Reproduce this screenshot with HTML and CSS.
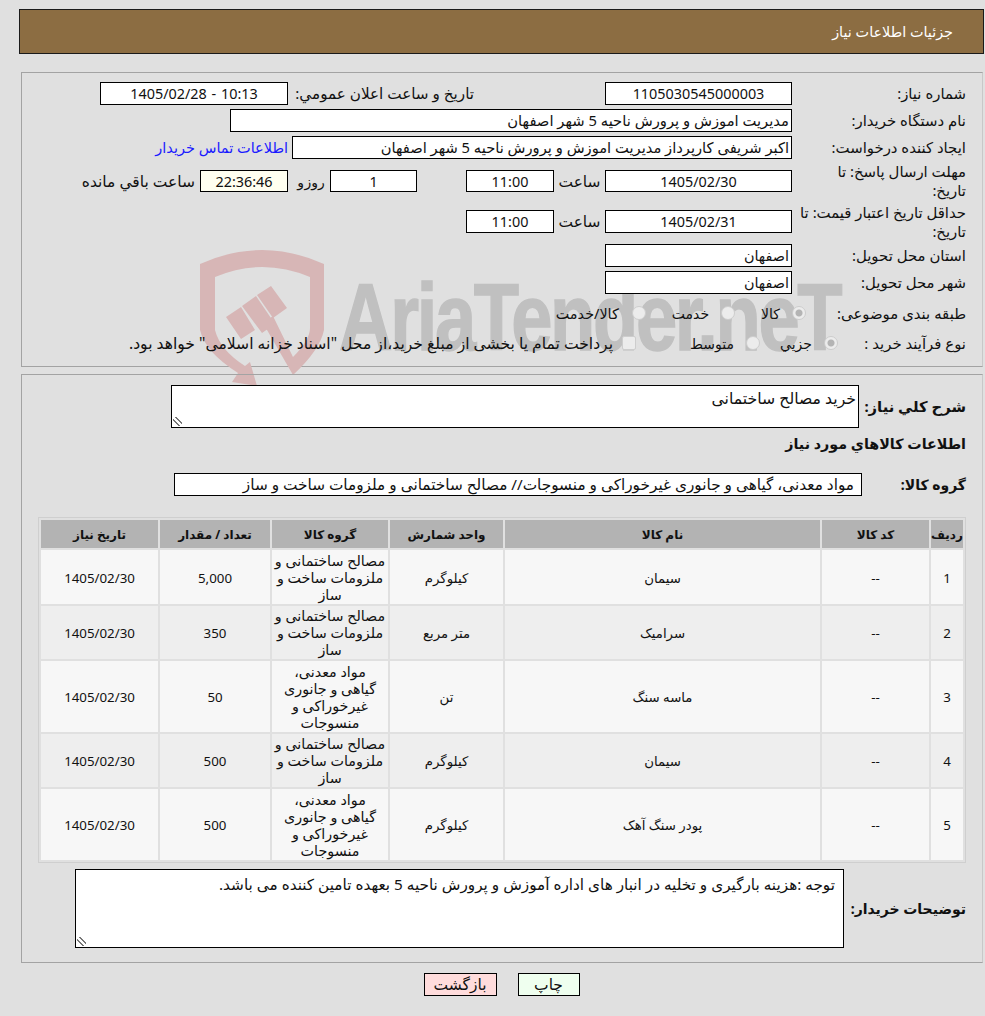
FILE: index.html
```html
<!DOCTYPE html>
<html lang="fa" dir="rtl">
<head>
<meta charset="utf-8">
<title>جزئیات اطلاعات نیاز</title>
<link rel="stylesheet" href="styles.css">
</head>
<body>
<header class="title-bar">جزئیات اطلاعات نیاز</header>

<section class="panel panel-top">
  <div class="watermark" aria-hidden="true">
    <svg class="wm-shield" viewBox="195 245 135 145" width="135" height="145">
      <path d="M200 264 Q262 236 324 264 L324 330 Q320 350 293 375 L263 323 L273 316 L293 357 Q310 340 310 328 L310 277 Q262 257 215 277 L215 330 Q220 350 245 366 L250 362 L257 386 L232 382 L238 373 Q205 352 200 330 Z" fill="#d7b6b6"/>
      <path d="M226 317 L241 307 L255 330 L241 339 Z M242 306 L256 296 L275 324 L262 333 Z M257 295 L271 286 L287 308 L273 318 Z" fill="#d7b6b6"/>
    </svg>
    <span class="wm-text" dir="ltr">AriaTender.neT</span>
  </div>

  <div class="row r1">
    <span class="label">شماره نیاز:</span>
    <span class="box w-date">1105030545000003</span>
    <span class="label-public">تاریخ و ساعت اعلان عمومي:</span>
    <span class="box w-date2">10:13 - 1405/02/28</span>
  </div>
  <div class="row r2">
    <span class="label">نام دستگاه خریدار:</span>
    <span class="box start w-buyer">مدیریت اموزش و پرورش ناحیه 5 شهر اصفهان</span>
  </div>
  <div class="row r3">
    <span class="label">ایجاد کننده درخواست:</span>
    <span class="box start w-creator">اکبر شریفی کارپرداز مدیریت اموزش و پرورش ناحیه 5 شهر اصفهان</span>
    <a class="contact" href="#">اطلاعات تماس خریدار</a>
  </div>
  <div class="row r4">
    <span class="label two-line">مهلت ارسال پاسخ: تا<br>تاریخ:</span>
    <span class="box w-date">1405/02/30</span>
    <span class="time-label">ساعت</span>
    <span class="box w-time">11:00</span>
    <span class="box w-days">1</span>
    <span class="days-label">روز و</span>
    <span class="box w-clock">22:36:46</span>
    <span class="clock-label">ساعت باقي مانده</span>
  </div>
  <div class="row r5">
    <span class="label two-line">حداقل تاریخ اعتبار قیمت: تا<br>تاریخ:</span>
    <span class="box w-date">1405/02/31</span>
    <span class="time-label">ساعت</span>
    <span class="box w-time">11:00</span>
  </div>
  <div class="row r6">
    <span class="label">استان محل تحویل:</span>
    <span class="box start w-date">اصفهان</span>
  </div>
  <div class="row r7">
    <span class="label">شهر محل تحویل:</span>
    <span class="box start w-date">اصفهان</span>
  </div>
  <div class="row r8">
    <span class="label">طبقه بندی موضوعی:</span>
    <span class="opt o1"><i class="radio on"></i>کالا</span>
    <span class="opt o2"><i class="radio"></i>خدمت</span>
    <span class="opt o3"><i class="radio"></i>کالا/خدمت</span>
  </div>
  <div class="row r9">
    <span class="label">نوع فرآیند خرید :</span>
    <span class="opt p1"><i class="radio on"></i>جزیي</span>
    <span class="opt p2"><i class="radio"></i>متوسط</span>
    <span class="opt p3"><i class="check"></i>پرداخت تمام یا بخشی از مبلغ خرید،از محل "اسناد خزانه اسلامی" خواهد بود.</span>
  </div>
</section>

<section class="panel panel-bottom">
  <div class="row need">
    <span class="label strong">شرح کلي نیاز:</span>
    <div class="area area-need">خرید مصالح ساختمانی<i class="grip"></i></div>
  </div>
  <h2 class="section-title">اطلاعات کالاهاي مورد نیاز</h2>
  <div class="row group">
    <span class="label strong">گروه کالا:</span>
    <span class="box start w-group">مواد معدنی، گیاهی و جانوری غیرخوراکی و منسوجات// مصالح ساختمانی و ملزومات ساخت و ساز</span>
  </div>

  <table class="items">
    <colgroup>
      <col class="c1"><col class="c2"><col class="c3"><col class="c4"><col class="c5"><col class="c6"><col class="c7">
    </colgroup>
    <thead>
      <tr><th>ردیف</th><th>کد کالا</th><th>نام کالا</th><th>واحد شمارش</th><th>گروه کالا</th><th>تعداد / مقدار</th><th>تاریخ نیاز</th></tr>
    </thead>
    <tbody>
      <tr class="h54"><td>1</td><td>--</td><td>سیمان</td><td>کیلوگرم</td><td class="cat">مصالح ساختمانی و ملزومات ساخت و ساز</td><td>5,000</td><td>1405/02/30</td></tr>
      <tr class="h53"><td>2</td><td>--</td><td>سرامیک</td><td>متر مربع</td><td class="cat">مصالح ساختمانی و ملزومات ساخت و ساز</td><td>350</td><td>1405/02/30</td></tr>
      <tr class="h71"><td>3</td><td>--</td><td>ماسه سنگ</td><td>تن</td><td class="cat">مواد معدنی،<br>گیاهی و جانوری غیرخوراکی و منسوجات</td><td>50</td><td>1405/02/30</td></tr>
      <tr class="h53"><td>4</td><td>--</td><td>سیمان</td><td>کیلوگرم</td><td class="cat">مصالح ساختمانی و ملزومات ساخت و ساز</td><td>500</td><td>1405/02/30</td></tr>
      <tr class="h71"><td>5</td><td>--</td><td>پودر سنگ آهک</td><td>کیلوگرم</td><td class="cat">مواد معدنی،<br>گیاهی و جانوری غیرخوراکی و منسوجات</td><td>500</td><td>1405/02/30</td></tr>
    </tbody>
  </table>

  <div class="row notes">
    <span class="label strong">توضیحات خریدار:</span>
    <div class="area area-notes">توجه :هزینه بارگیری و تخلیه در انبار های اداره آموزش و پرورش ناحیه 5 بعهده تامین کننده می باشد.<i class="grip"></i></div>
  </div>
</section>

<div class="actions">
  <button class="btn print" type="button">چاپ</button>
  <button class="btn back" type="button">بازگشت</button>
</div>
</body>
</html>
```

FILE: styles.css
```css
* { box-sizing: border-box; }
html, body { margin: 0; height: 1016px; overflow: hidden; }
body {
  background: #e0e0e0;
  color: #111;
  font: 14.4px/17px "Noto Sans", "DejaVu Sans", sans-serif;
  padding: 9px 1px 0 0;
  direction: rtl;
}
.title-bar {
  margin: 0 0 18px 19px;
  height: 45px;
  background: #8c6d42;
  border: 1px solid #1a1a1a;
  color: #fff;
  font-size: 14.4px;
  padding: 13px 30px 0 0;
}
.panel {
  position: relative;
  margin: 0 1px 0 21px;
  border: 1px solid #a3a3a3;
  border-right-color: #c8c8c8;
  padding-right: 16px;
}
.panel-top { height: 295px; padding-top: 9px; margin-bottom: 7px; }
.panel-bottom { height: 589px; padding-top: 10px; }

.watermark { position: absolute; z-index: 0; left: 173px; top: 172px; width: 630px; height: 145px; pointer-events: none; }
.wm-shield { position: absolute; left: 0; top: 0; display: block; }
.wm-text {
  position: absolute; left: 144px; top: 25px;
  font: bold 95px/95px "Liberation Sans", sans-serif;
  letter-spacing: -3px;
  color: #c0c0c0;
  -webkit-text-stroke: 1.5px #c0c0c0;
  transform: scaleX(.78);
  transform-origin: left top;
  white-space: nowrap;
}

.row { position: relative; display: flex; align-items: center; }
.r1, .r2, .r3 { height: 23px; margin-bottom: 4px; }
.r3 { margin-bottom: 6px; }
.r4 { height: 22px; margin: 11px 0 18px; }
.r5 { height: 23px; margin-bottom: 11px; }
.r6 { height: 23px; margin-bottom: 4px; }
.r7 { height: 23px; margin-bottom: 8px; }
.r8 { height: 22px; margin-bottom: 8px; }
.r9 { height: 22px; }

.label { width: 174px; flex: none; font-size: 14.9px; }
.two-line { line-height: 19px; }
.strong { font-size: 14px; font-weight: 700; }
.r8 .label { width: 160px; }
.r9 .label { width: 128px; }

.box {
  flex: none;
  height: 100%;
  background: #fff;
  border: 1px solid #000;
  display: flex;
  align-items: center;
  justify-content: center;
  white-space: nowrap;
  position: relative;
  overflow: hidden;
}
.box.start { justify-content: flex-start; padding-right: 2px; }
.w-date { width: 187px; }
.w-date2 { width: 188px; margin-right: 5px; word-spacing: 1px; }
.w-buyer { width: 562px; font-size: 14.75px; }
.w-creator { width: 500px; font-size: 14.7px; }
.w-time { width: 88px; }
.w-days { width: 87px; margin-right: 49px; }
.w-clock { width: 88px; background: #fffff0; }
.box.w-group { width: 688px; padding-right: 7px; font-size: 15.3px; }

.label-public { width: 181px; margin-right: 131px; flex: none; white-space: nowrap; font-size: 15.2px; }
.contact { margin-right: 4px; color: #1a1aff; text-decoration: none; white-space: nowrap; font-size: 14.5px; }
.time-label { width: 51px; flex: none; text-align: center; font-size: 15.4px; }
.days-label { width: 42px; flex: none; padding-left: 4px; text-align: center; white-space: nowrap; font-size: 14px; word-spacing: -3px; }
.clock-label { margin-right: 5px; white-space: nowrap; font-size: 15.5px; }

.opt { position: relative; display: inline-flex; align-items: center; white-space: nowrap; font-size: 14px; gap: 12px; }
.radio, .check { flex: none; display: block; width: 14px; height: 14px; background: #ececec; border: 1px solid #cdcdcd; }
.radio { border-radius: 50%; }
.radio.on { background: radial-gradient(circle, #b4b4b4 0 3px, #ececec 4px); }
.check { border-radius: 2px; }
.o2 { margin-right: 26px; }
.o3 { gap: 13px; margin-right: 26px; font-size: 14.4px; }
.p2 { margin-right: 20px; }
.p3 { margin-right: 54px; gap: 9px; font-size: 15.6px; }

.need { height: 43px; }
.need .label { width: 107px; font-size: 14.8px; }
.area {
  position: relative;
  flex: none;
  background: #fff;
  border: 1px solid #000;
  height: 100%;
}
.area-need { width: 688px; padding: 4px 2px; font-size: 15.7px; }
.area-notes { width: 769px; padding: 6px 8px; font-size: 15.27px; }
.grip {
  position: absolute; left: 1px; bottom: 1px; width: 9px; height: 9px;
  background: linear-gradient(45deg, transparent 0 30%, #777 30% 40%, transparent 40% 60%, #777 60% 70%, transparent 70%);
}
.section-title { margin: 7px 0 21px; font-size: 14.3px; line-height: 17px; font-weight: 700; }
.group { height: 23px; }
.group .label { width: 104px; }

.items {
  width: 928px;
  height: 346px;
  margin: 21px 0 0;
  table-layout: fixed;
  border: 1px solid #cfcfcf;
  border-collapse: separate;
  border-spacing: 2px;
  padding: 0;
}
.c1 { width: 32px; } .c2 { width: 107px; } .c3 { width: 315px; } .c4 { width: 113px; }
.c5 { width: 116px; } .c6 { width: 110px; } .c7 { width: 117px; }
.items th { height: 28px; background: #b3b3b3; font-size: 12px; padding: 0; }
.items td { background: #f7f7f7; text-align: center; padding: 2px 0 0; line-height: 17px; font-size: 13.3px; }
.items td.cat { font-size: 14.3px; padding-top: 0; }
.items tbody tr:nth-child(even) td { background: #eee; }
.h54 { height: 54px; }
.h53 { height: 53px; }
.h71 { height: 71px; }

.notes { height: 79px; margin-top: 6px; }
.notes .label { width: 122px; }

.actions { display: flex; justify-content: center; gap: 21px; margin-top: 10px; padding-left: 19px; }
.btn {
  width: 62px; height: 23px; padding: 0;
  border: 1px solid #000;
  font: inherit; font-size: 15.5px; color: #111;
}
.print { background: #efffef; }
.back { background: #ffdcdc; width: 73px; }
```
